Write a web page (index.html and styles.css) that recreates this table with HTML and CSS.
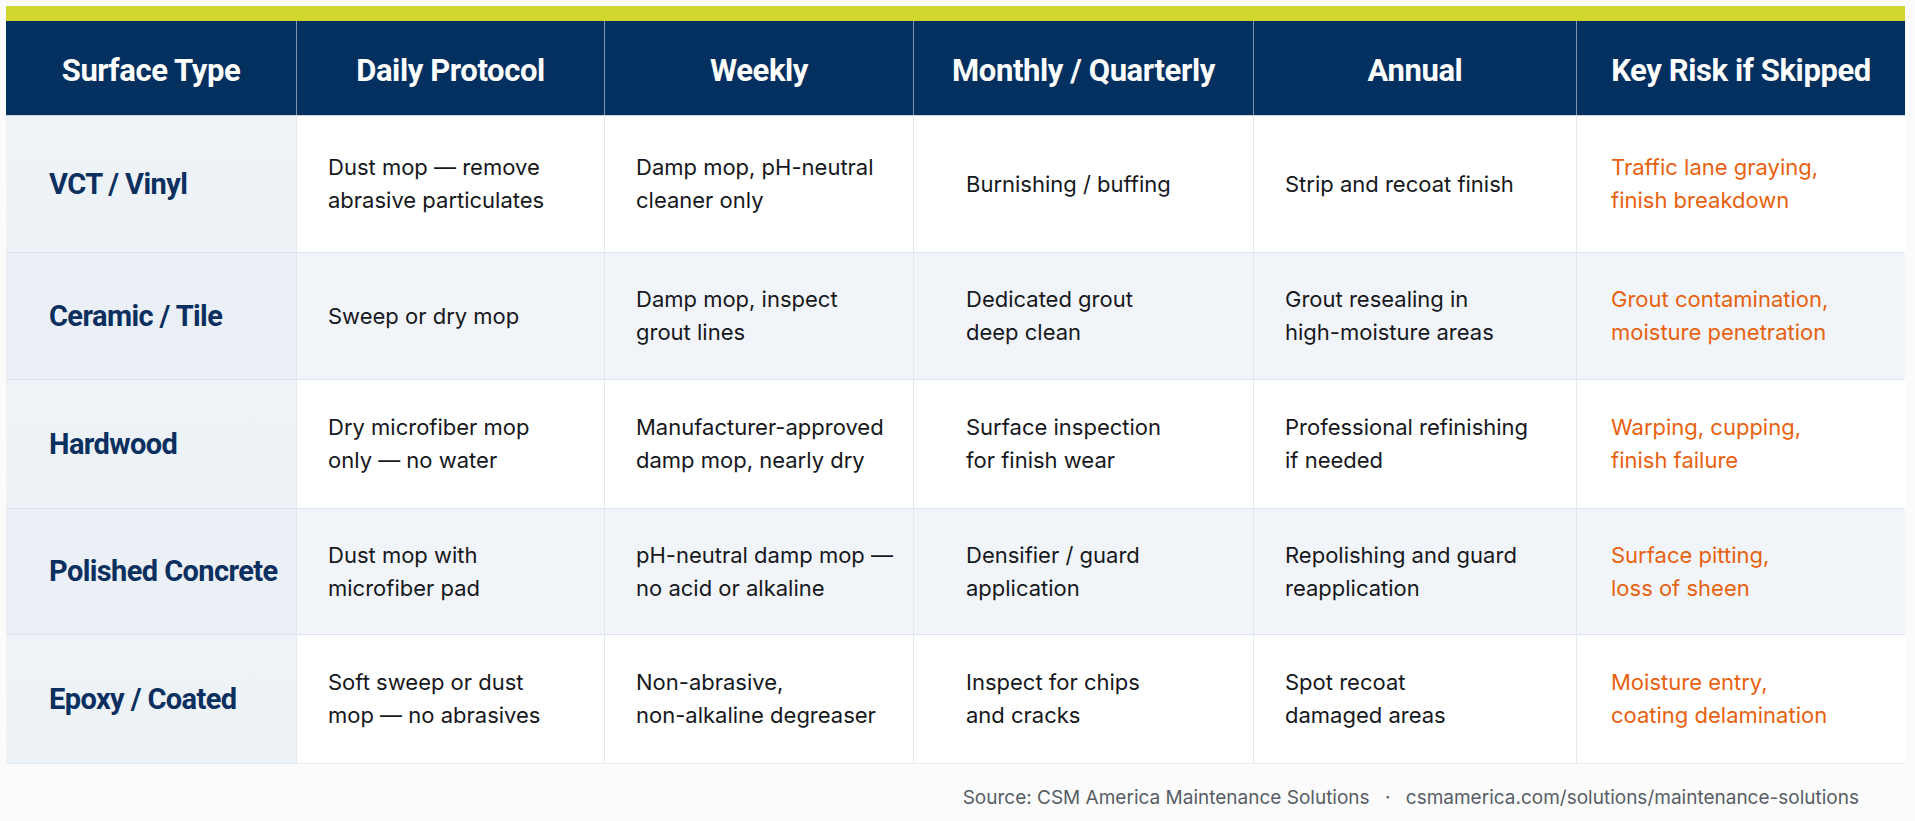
FILE: index.html
```html
<!DOCTYPE html>
<html lang="en">
<head>
<meta charset="utf-8">
<title>Floor Maintenance Schedule</title>
<link rel="stylesheet" href="styles.css">
</head>
<body>
<div class="page">
  <div class="accent"></div>
  <div class="row head">
    <div class="cell">Surface Type</div>
    <div class="cell">Daily Protocol</div>
    <div class="cell">Weekly</div>
    <div class="cell">Monthly / Quarterly</div>
    <div class="cell">Annual</div>
    <div class="cell">Key Risk if Skipped</div>
  </div>
  <div class="row r1">
    <div class="cell type">VCT / Vinyl</div>
    <div class="cell">Dust mop — remove<br>abrasive particulates</div>
    <div class="cell">Damp mop, pH-neutral<br>cleaner only</div>
    <div class="cell mq">Burnishing / buffing</div>
    <div class="cell">Strip and recoat finish</div>
    <div class="cell risk">Traffic lane graying,<br>finish breakdown</div>
  </div>
  <div class="row r2 alt">
    <div class="cell type">Ceramic / Tile</div>
    <div class="cell">Sweep or dry mop</div>
    <div class="cell">Damp mop, inspect<br>grout lines</div>
    <div class="cell mq">Dedicated grout<br>deep clean</div>
    <div class="cell">Grout resealing in<br>high-moisture areas</div>
    <div class="cell risk">Grout contamination,<br>moisture penetration</div>
  </div>
  <div class="row r3">
    <div class="cell type">Hardwood</div>
    <div class="cell">Dry microfiber mop<br>only — no water</div>
    <div class="cell">Manufacturer-approved<br>damp mop, nearly dry</div>
    <div class="cell mq">Surface inspection<br>for finish wear</div>
    <div class="cell">Professional refinishing<br>if needed</div>
    <div class="cell risk">Warping, cupping,<br>finish failure</div>
  </div>
  <div class="row r4 alt">
    <div class="cell type">Polished Concrete</div>
    <div class="cell">Dust mop with<br>microfiber pad</div>
    <div class="cell">pH-neutral damp mop —<br>no acid or alkaline</div>
    <div class="cell mq">Densifier / guard<br>application</div>
    <div class="cell">Repolishing and guard<br>reapplication</div>
    <div class="cell risk">Surface pitting,<br>loss of sheen</div>
  </div>
  <div class="row r5">
    <div class="cell type">Epoxy / Coated</div>
    <div class="cell">Soft sweep or dust<br>mop — no abrasives</div>
    <div class="cell">Non-abrasive,<br>non-alkaline degreaser</div>
    <div class="cell mq">Inspect for chips<br>and cracks</div>
    <div class="cell">Spot recoat<br>damaged areas</div>
    <div class="cell risk">Moisture entry,<br>coating delamination</div>
  </div>
  <div class="source">Source: CSM America Maintenance Solutions <span class="dot">·</span> csmamerica.com/solutions/maintenance-solutions</div>
</div>
</body>
</html>
```

FILE: styles.css
```css
* { box-sizing: border-box; }
html, body { margin: 0; padding: 0; background: #fbfbfc; }
body { font-family: Inter, "Noto Sans", sans-serif; color: #16181c; }
.page { width: 1915px; padding: 6px 10px 0 6px; }
.accent { height: 15px; width: 1899px; background: #d0d62b; }
.row {
  display: grid;
  grid-template-columns: 291px 308px 309px 340px 323px 328px;
  width: 1899px;
  background: #ffffff;
  border-bottom: 1px solid #dfe5ec;
}
.row.alt { background: #f1f5f9; }
.cell {
  display: flex;
  align-items: center;
  padding-left: 31px;
  font-size: 22px;
  line-height: 33px;
  border-right: 1px solid #e3e8ee;
}
.cell:last-child { border-right: none; }
.head { height: 95px; background: #04305f; border-bottom: 1px solid #c9d3df; }
.head .cell {
  justify-content: center;
  padding-left: 0;
  padding-top: 4px;
  color: #ffffff;
  font-family: Roboto, "Liberation Sans", sans-serif;
  font-weight: 700;
  font-size: 31px;
  letter-spacing: -0.4px;
  border-right: 1px solid #7f93ad;
}
.head .cell:last-child { border-right: none; }
.r1 { height: 137px; }
.r2 { height: 127px; }
.r3 { height: 129px; }
.r4 { height: 126px; }
.r5 { height: 129px; border-bottom: 1px solid #e8ecf1; }
.type {
  padding-left: 43px;
  background: linear-gradient(180deg, #eef3f8 0%, #edf2f7 100%);
  color: #0b2f5e;
  font-family: Roboto, "Liberation Sans", sans-serif;
  font-weight: 700;
  font-size: 29px;
  letter-spacing: -0.6px;
}
.alt .type { background: #ebf0f6; }
.mq { padding-left: 52px; }
.risk { color: #e8610f; padding-left: 34px; }
.source {
  width: 1899px;
  text-align: right;
  padding-right: 46px;
  margin-top: 22px;
  font-size: 19px;
  color: #585d65;
}
.dot { padding: 0 10px; }
```
